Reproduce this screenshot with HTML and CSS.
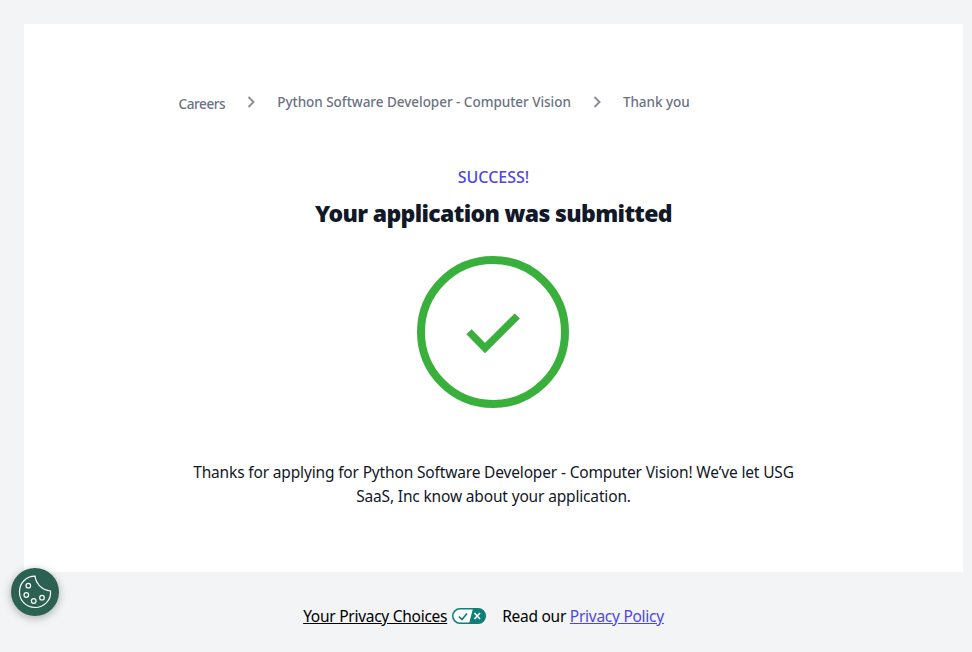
FILE: index.html
```html
<!DOCTYPE html>
<html lang="en">
<head>
<meta charset="utf-8">
<title>Thank you</title>
<link rel="stylesheet" href="styles.css">
</head>
<body>
<main class="card">
  <nav class="crumbs">
    <a class="crumb crumb-first" href="#">Careers</a>
    <svg class="chev" width="8" height="12" viewBox="0 0 8 12"><path d="M1.500 1l5 5-5 5" fill="none" stroke="#8b9098" stroke-width="2"/></svg>
    <a class="crumb" href="#">Python Software Developer - Computer Vision</a>
    <svg class="chev" width="8" height="12" viewBox="0 0 8 12"><path d="M1.500 1l5 5-5 5" fill="none" stroke="#8b9098" stroke-width="2"/></svg>
    <span class="crumb">Thank you</span>
  </nav>
  <p class="eyebrow">SUCCESS!</p>
  <h1 class="title">Your application was submitted</h1>
  <svg class="success" width="152" height="152" viewBox="0 0 152 152">
    <circle cx="76" cy="76" r="72" fill="none" stroke="#39b03c" stroke-width="8"/>
    <path d="M52 75.800L68 92l32.300-32" fill="none" stroke="#39b03c" stroke-width="7.300"/>
  </svg>
  <p class="message">Thanks for applying for Python Software Developer - Computer Vision! We’ve let USG SaaS, Inc know about your application.</p>
</main>
<footer class="foot">
  <a class="choices" href="#">Your Privacy Choices</a>
  <svg class="toggle" width="34" height="16" viewBox="0 0 34 16">
    <rect x="0.750" y="0.750" width="32.500" height="14.500" rx="7.250" fill="#fff" stroke="#0f7f78" stroke-width="1.500"/>
    <path d="M21 0.500h5a7.500 7.500 0 0 1 0 15h-9z" fill="#0f7f78"/>
    <path d="M7 8.500l3 3 5-6" fill="none" stroke="#0f7f78" stroke-width="1.700"/>
    <path d="M22.500 5l5.500 6M28 5l-5.500 6" fill="none" stroke="#fff" stroke-width="1.700"/>
  </svg>
  <span class="read">Read our <a class="policy" href="#">Privacy Policy</a></span>
</footer>
<button class="cookie" aria-label="Cookie settings">
  <svg width="34" height="34" viewBox="0 0 34 34" fill="none" stroke="#fff" stroke-width="1.200">
    <path d="M17 1.200C18 9 24 15 32.500 16 33.500 25 26 32.500 17 32.500 8 32.500 1.500 25.500 1.500 17 1.500 8 8 1.200 17 1.200z"/>
    <circle cx="10.300" cy="10.700" r="2.300"/>
    <circle cx="8.300" cy="20" r="2.300"/>
    <circle cx="15.700" cy="26" r="2.300"/>
    <circle cx="24" cy="22.700" r="2.300"/>
  </svg>
</button>
</body>
</html>
```
FILE: styles.css
```css
* { box-sizing: border-box; }
html, body { margin: 0; height: 100%; }
body {
  background: #f3f4f6;
  padding: 24px 9px 0 24px;
  font-family: "Noto Sans", "Open Sans", sans-serif;
  color: #111827;
  overflow: hidden;
}
.card {
  background: #fff;
  height: 548px;
  display: flex;
  flex-direction: column;
  align-items: center;
  padding-top: 68px;
}
.crumbs {
  width: 630px;
  height: 20px;
  display: flex;
  align-items: center;
  gap: 22px;
  font-size: 13.500px;
  letter-spacing: -0.030px;
  font-weight: 500;
  color: #6b7280;
}
.crumb { color: inherit; text-decoration: none; }
.crumb-first { position: relative; top: 1.500px; letter-spacing: -0.400px; }
.eyebrow {
  margin: 53px 0 0;
  color: #4f46e5;
  font-size: 16px;
  font-weight: 500;
  line-height: 24px;
}
.title {
  margin: 8px 0 0;
  font-size: 23px;
  letter-spacing: -0.650px;
  line-height: 32px;
  font-weight: 900;
  color: #111827;
}
.success { margin-top: 27px; margin-left: -1px; }
.message {
  margin: 52px 0 0;
  width: 620px;
  text-align: center;
  font-size: 15.500px;
  letter-spacing: -0.160px;
  line-height: 24px;
}
.foot {
  height: 88px;
  display: flex;
  align-items: center;
  justify-content: center;
  font-size: 15.500px;
  letter-spacing: -0.270px;
  color: #000;
  margin-left: -24px;
  margin-right: -9px;
  padding-right: 5px;
}
.choices { color: #000; }
.toggle { margin: 0 16px 0 5px; }
.policy { color: #4f46e5; }
.cookie {
  position: fixed;
  left: 11px;
  top: 568px;
  width: 48px;
  height: 48px;
  border: 0;
  padding: 0;
  border-radius: 50%;
  background: #2b6150;
  box-shadow: 0 2px 8px rgba(0,0,0,.3);
  display: flex;
  align-items: center;
  justify-content: center;
}
```
